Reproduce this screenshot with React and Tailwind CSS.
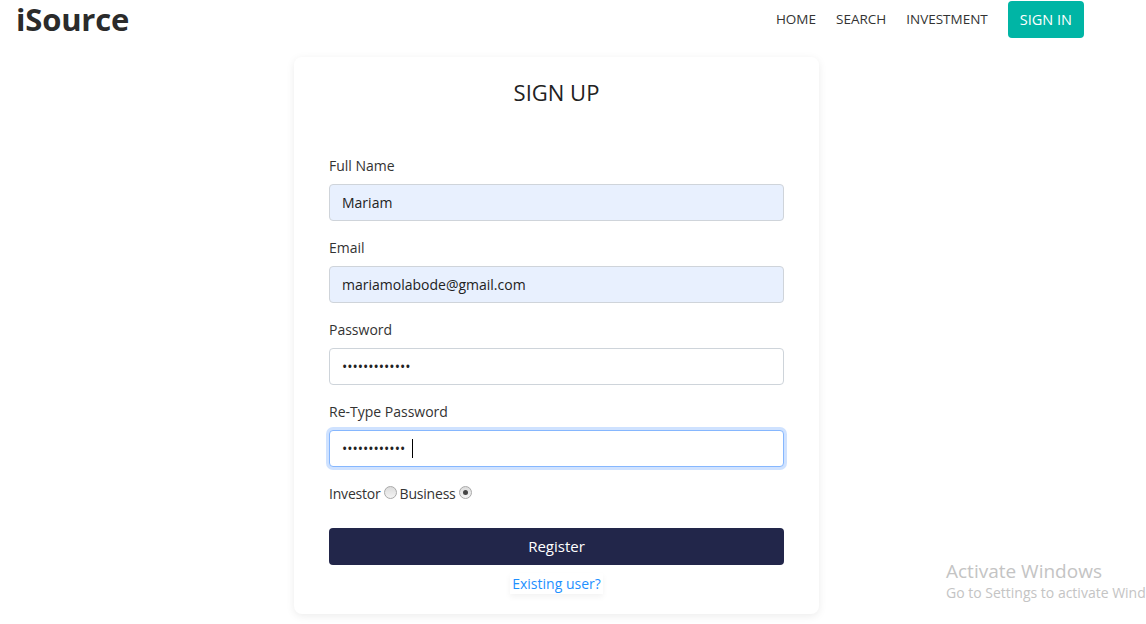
import React from 'react'

const Field = ({ label, children }) => (
  <div className="flex flex-col">
    <label className="text-[14px] text-[#333] mb-[9px] leading-[18px]">{label}</label>
    {children}
  </div>
)

const Radio = ({ checked }) => (
  <span className="inline-flex items-center justify-center w-[13px] h-[13px] rounded-full border border-[#a9a9a9] bg-gradient-to-b from-[#dcdcdc] to-[#f4f4f4] mx-[3px] mb-[3px]">
    {checked && <span className="w-[5px] h-[5px] rounded-full bg-[#444]" />}
  </span>
)

const App = () => {
  const inputBase = "w-full h-[37px] px-3 rounded-[4px] border text-[14px] text-[#222] outline-none"

  return (
    <div className="relative min-h-[624px] bg-white overflow-hidden" style={{ fontFamily: '"Open Sans", "Noto Sans", sans-serif' }}>
      <nav className="flex items-center justify-between h-[40px] pl-4 pr-[62px]">
        <p className="text-[31px] font-bold text-[#2b2b2b] tracking-[-0.2px] leading-[40px] -mt-[2px]">iSource</p>
        <div className="flex items-center gap-5 text-[13.5px] text-[#333] -mt-[2px]">
          <a className="cursor-pointer">HOME</a>
          <a className="cursor-pointer">SEARCH</a>
          <a className="cursor-pointer">INVESTMENT</a>
          <button className="bg-[#00b5a5] text-white h-[37px] px-[12px] rounded-[4px] text-[14.5px] mt-[1px]">SIGN IN</button>
        </div>
      </nav>

      <div className="ml-[294px] mt-[17px] w-[525px] rounded-[8px] bg-white shadow-[0_2px_8px_rgba(0,0,0,0.08)] px-[35px] pt-[20px] pb-[20px]">
        <p className="text-center text-[22px] text-[#222] leading-[30px]">SIGN UP</p>

        <div className="flex flex-col gap-[18px] mt-[50px]">
          <Field label="Full Name">
            <input readOnly value="Mariam" className={`${inputBase} bg-[#e8f0fe] border-[#cfd4da]`} />
          </Field>
          <Field label="Email">
            <input readOnly value="mariamolabode@gmail.com" className={`${inputBase} bg-[#e8f0fe] border-[#cfd4da]`} />
          </Field>
          <Field label="Password">
            <input readOnly type="password" value="passwordpass1" className={`${inputBase} bg-white border-[#ced4da]`} />
          </Field>
          <Field label="Re-Type Password">
            <div className="relative">
              <input readOnly type="password" value="passwordpass" className={`${inputBase} bg-white border-[#86b7fe] shadow-[0_0_0_3px_rgba(13,110,253,0.2)]`} />
              <span className="absolute left-[83px] top-[9px] w-px h-[19px] bg-black" />
            </div>
          </Field>
        </div>

        <div className="flex items-center mt-[16px] text-[14px] text-[#333] tracking-[-0.2px]">
          <span>Investor</span>
          <Radio />
          <span>Business</span>
          <Radio checked />
        </div>

        <button className="w-full h-[37px] mt-[24px] rounded-[4px] bg-[#22264a] text-white text-[15px]">Register</button>

        <div className="flex justify-center mt-[8px]">
          <a className="text-[14px] text-[#1e90ff] px-[2px] shadow-[0_3px_6px_rgba(0,0,0,0.05)] cursor-pointer">Existing user?</a>
        </div>
      </div>

      <div className="absolute left-[946px] top-[558px] text-[#c4c4c4] pointer-events-none whitespace-nowrap">
        <p className="text-[19px] leading-[26px]">Activate Windows</p>
        <p className="text-[14px] leading-[18px]">Go to Settings to activate Windows.</p>
      </div>
    </div>
  )
}

export default App
